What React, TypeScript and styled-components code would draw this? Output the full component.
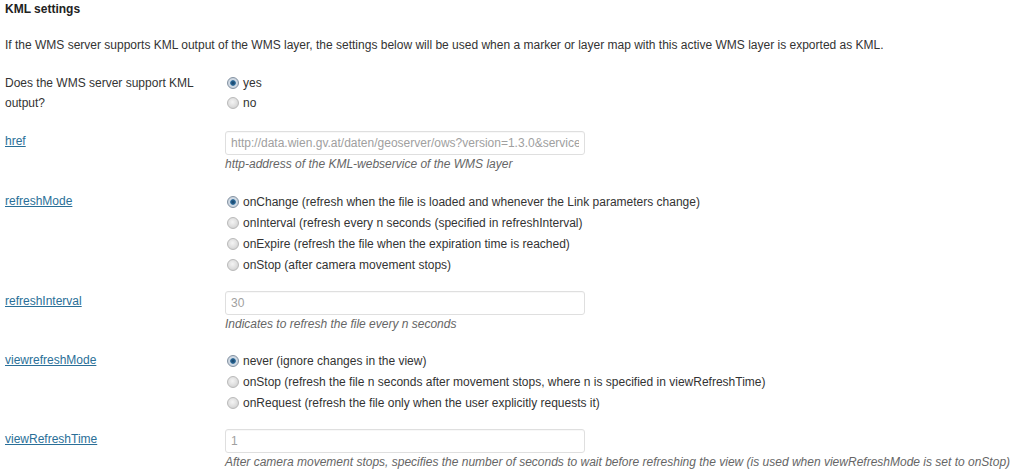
import React from "react";
import styled, { createGlobalStyle } from "styled-components";

const Global = createGlobalStyle`
  html, body { margin: 0; padding: 0; background: #ffffff; }
  body { font-family: "Liberation Sans", Arial, sans-serif; font-size: 12px; color: #333333; }
`;

const Page = styled.div`
  padding: 0 5px;
  width: 1019px;
  height: 476px;
  overflow: hidden;
`;

const Title = styled.h3`
  margin: 0;
  font-size: 12px;
  font-weight: bold;
  line-height: 18px;
  color: #222222;
`;

const Desc = styled.p`
  margin: 18px 0 0;
  line-height: 18px;
`;

const Row = styled.div<{ $top: number }>`
  display: grid;
  grid-template-columns: 220px 1fr;
  margin-top: ${(p) => p.$top}px;
`;

const Label = styled.div`
  line-height: 20px;
`;

const LabelLink = styled.a`
  color: #2a6f98;
  text-decoration: underline;
  line-height: 20px;
`;

const Field = styled.div`
  display: flex;
  flex-direction: column;
`;

const Option = styled.label<{ $h: number }>`
  display: flex;
  align-items: center;
  gap: 4px;
  height: ${(p) => p.$h}px;
  padding-left: 2px;
`;

const Radio = styled.span<{ $on?: boolean }>`
  width: 12px;
  height: 12px;
  border-radius: 50%;
  box-sizing: border-box;
  border: 1px solid ${(p) => (p.$on ? "#8593a2" : "#b9b9b9")};
  background: ${(p) =>
    p.$on
      ? "radial-gradient(circle at 50% 50%, #173f63 0, #2b6a99 2.4px, #d4dde7 3.2px, #b9c6d3 100%)"
      : "radial-gradient(circle at 45% 40%, #f4f4f4 0, #dedede 55%, #c6c6c6 100%)"};
  flex: none;
`;

const Input = styled.input`
  width: 360px;
  height: 24px;
  box-sizing: border-box;
  border: 1px solid #dfdfdf;
  border-radius: 3px;
  padding: 0 5px;
  font-family: "Liberation Sans", Arial, sans-serif;
  font-size: 12px;
  color: #a0a0a0;
  background: #ffffff;
  outline: none;
  box-shadow: inset 0 1px 1px rgba(0,0,0,0.03);
`;

const Help = styled.div`
  font-style: italic;
  color: #666666;
  line-height: 16px;
  margin-top: 1px;
  white-space: nowrap;
`;

const RadioList: React.FC<{ items: string[]; h: number }> = ({ items, h }) => (
  <Field>
    {items.map((t, i) => (
      <Option key={t} $h={h}>
        <Radio $on={i === 0} />
        {t}
      </Option>
    ))}
  </Field>
);

export default function App() {
  return (
    <Page>
      <Global />
      <Title>KML settings</Title>
      <Desc>
        If the WMS server supports KML output of the WMS layer, the settings below will be used when a marker or layer map with this active WMS layer is exported as KML.
      </Desc>
      <Row $top={19}>
        <Label>
          Does the WMS server support KML
          <br />
          output?
        </Label>
        <RadioList items={["yes", "no"]} h={20} />
      </Row>
      <Row $top={18}>
        <Label>
          <LabelLink href="#">href</LabelLink>
        </Label>
        <Field>
          <Input readOnly value="http://data.wien.gv.at/daten/geoserver/ows?version=1.3.0&service=WMS&request=GetMap" />
          <Help>http-address of the KML-webservice of the WMS layer</Help>
        </Field>
      </Row>
      <Row $top={19}>
        <Label>
          <LabelLink href="#">refreshMode</LabelLink>
        </Label>
        <RadioList
          h={21}
          items={[
            "onChange (refresh when the file is loaded and whenever the Link parameters change)",
            "onInterval (refresh every n seconds (specified in refreshInterval)",
            "onExpire (refresh the file when the expiration time is reached)",
            "onStop (after camera movement stops)",
          ]}
        />
      </Row>
      <Row $top={16}>
        <Label>
          <LabelLink href="#">refreshInterval</LabelLink>
        </Label>
        <Field>
          <Input readOnly value="30" />
          <Help>Indicates to refresh the file every n seconds</Help>
        </Field>
      </Row>
      <Row $top={18}>
        <Label>
          <LabelLink href="#">viewrefreshMode</LabelLink>
        </Label>
        <RadioList
          h={21}
          items={[
            "never (ignore changes in the view)",
            "onStop (refresh the file n seconds after movement stops, where n is specified in viewRefreshTime)",
            "onRequest (refresh the file only when the user explicitly requests it)",
          ]}
        />
      </Row>
      <Row $top={16}>
        <Label>
          <LabelLink href="#">viewRefreshTime</LabelLink>
        </Label>
        <Field>
          <Input readOnly value="1" />
          <Help>After camera movement stops, specifies the number of seconds to wait before refreshing the view (is used when viewRefreshMode is set to onStop)</Help>
        </Field>
      </Row>
    </Page>
  );
}
